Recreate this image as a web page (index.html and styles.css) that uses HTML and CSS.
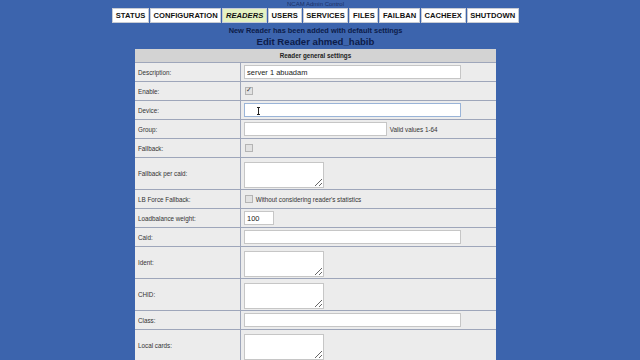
FILE: index.html
```html
<!DOCTYPE html>
<html lang="en">
<head>
  <meta charset="UTF-8">
  <title>NCAM Admin Control</title>
  <link rel="stylesheet" href="styles.css">
</head>
<body>
  <div class="page">
    <div class="app-title">NCAM Admin Control</div>
    <div class="menu">
      <a class="menu-item">STATUS</a>
      <a class="menu-item">CONFIGURATION</a>
      <a class="menu-item active">READERS</a>
      <a class="menu-item">USERS</a>
      <a class="menu-item">SERVICES</a>
      <a class="menu-item">FILES</a>
      <a class="menu-item">FAILBAN</a>
      <a class="menu-item">CACHEEX</a>
      <a class="menu-item">SHUTDOWN</a>
    </div>
    <div class="message">New Reader has been added with default settings</div>
    <div class="page-title">Edit Reader ahmed_habib</div>
    <table class="config">
      <tr><th colspan="2">Reader general settings</th></tr>
      <tr>
        <td class="label">Description:</td>
        <td><input class="wide" type="text" value="server 1 abuadam"></td>
      </tr>
      <tr>
        <td class="label">Enable:</td>
        <td><input type="checkbox" checked></td>
      </tr>
      <tr>
        <td class="label">Device:</td>
        <td class="cursor-cell"><input class="wide focus" type="text"><span class="ibeam"></span></td>
      </tr>
      <tr>
        <td class="label">Group:</td>
        <td><input class="mid" type="text"> <span class="hint">Valid values 1-64</span></td>
      </tr>
      <tr>
        <td class="label">Fallback:</td>
        <td><input type="checkbox"></td>
      </tr>
      <tr class="tall">
        <td class="label">Fallback per caid:</td>
        <td><textarea></textarea></td>
      </tr>
      <tr>
        <td class="label">LB Force Fallback:</td>
        <td><input type="checkbox"> <span class="hint">Without considering reader's statistics</span></td>
      </tr>
      <tr>
        <td class="label">Loadbalance weight:</td>
        <td><input class="short" type="text" value="100"></td>
      </tr>
      <tr>
        <td class="label">Caid:</td>
        <td><input class="wide" type="text"></td>
      </tr>
      <tr class="tall">
        <td class="label">Ident:</td>
        <td><textarea></textarea></td>
      </tr>
      <tr class="tall">
        <td class="label">CHID:</td>
        <td><textarea></textarea></td>
      </tr>
      <tr>
        <td class="label">Class:</td>
        <td><input class="wide" type="text"></td>
      </tr>
      <tr class="tall">
        <td class="label">Local cards:</td>
        <td><textarea></textarea></td>
      </tr>
    </table>
  </div>
</body>
</html>
```

FILE: styles.css
```css
html, body {
  margin: 0;
  padding: 0;
  height: 100%;
  overflow: hidden;
  background-color: #3c64ad;
  font-family: "Liberation Sans", Arial, sans-serif;
}
.page {
  width: 631px;
  display: flex;
  flex-direction: column;
  align-items: center;
}
.app-title {
  font-size: 6px;
  line-height: 8px;
  color: #1a2f66;
}
.menu {
  display: flex;
  gap: 1px;
  height: 15px;
}
.menu-item {
  background-color: #fff;
  border: 1px solid #c8ccd4;
  color: #111;
  font-weight: bold;
  font-size: 7.6px;
  letter-spacing: 0.05px;
  padding: 0 2.6px;
  display: flex;
  align-items: center;
  cursor: pointer;
}
.menu-item.active {
  background-color: #e5f2c2;
  font-style: italic;
}
.message {
  margin-top: 3px;
  font-size: 7.4px;
  font-weight: bold;
  color: #0c1c4a;
  line-height: 10px;
}
.page-title {
  font-size: 9.6px;
  font-weight: bold;
  color: #0c1c4a;
  line-height: 12px;
}
.config {
  width: 361px;
  margin-top: 1px;
  border-collapse: collapse;
  background-color: #ececec;
  font-size: 6.3px;
  color: #333;
}
.config th {
  background-color: #d3d3d3;
  height: 13px;
  padding: 0;
  font-weight: bold;
  color: #222;
  border-bottom: 1px solid #9ea6ba;
}
.config td {
  height: 18px;
  padding: 0 0 0 3px;
  border-bottom: 1px solid #9ea6ba;
}
.config td.label {
  width: 102px;
  border-right: 1px solid #9ea6ba;
}
.config tr.tall td {
  height: 31px;
}
.config input[type="text"] {
  box-sizing: border-box;
  height: 14px;
  margin: 0;
  padding: 0 2px;
  border: 1px solid #c6c6c6;
  background: #fff;
  font-family: "Liberation Sans", Arial, sans-serif;
  font-size: 7.5px;
  color: #222;
  vertical-align: middle;
}
.config input.focus {
  border-color: #9ab4d8;
}
.config input.wide { width: 217px; }
.config input.mid { width: 143px; }
.config input.short { width: 30px; }
.config input[type="checkbox"] {
  appearance: none;
  box-sizing: border-box;
  width: 8px;
  height: 8px;
  margin: 0 0 0 1px;
  border: 1px solid #b4b4b4;
  background: #e2e2e2;
  vertical-align: middle;
  position: relative;
}
.config input[type="checkbox"]:checked::after {
  content: "\2713";
  position: absolute;
  left: 0;
  top: -2px;
  font-size: 7px;
  color: #444;
}
.config textarea {
  box-sizing: border-box;
  width: 80px;
  height: 26px;
  margin: 2px 0 0;
  border: 1px solid #c6c6c6;
  background: #fff;
  vertical-align: middle;
}
.hint {
  margin-left: 1px;
  font-size: 6.3px;
  vertical-align: middle;
}
.cursor-cell {
  position: relative;
}
.ibeam {
  position: absolute;
  left: 17px;
  top: 6px;
  width: 1px;
  height: 8px;
  background: #222;
}
.ibeam::before,
.ibeam::after {
  content: "";
  position: absolute;
  left: -1px;
  width: 3px;
  height: 1px;
  background: #222;
}
.ibeam::before { top: 0; }
.ibeam::after { bottom: 0; }
```
